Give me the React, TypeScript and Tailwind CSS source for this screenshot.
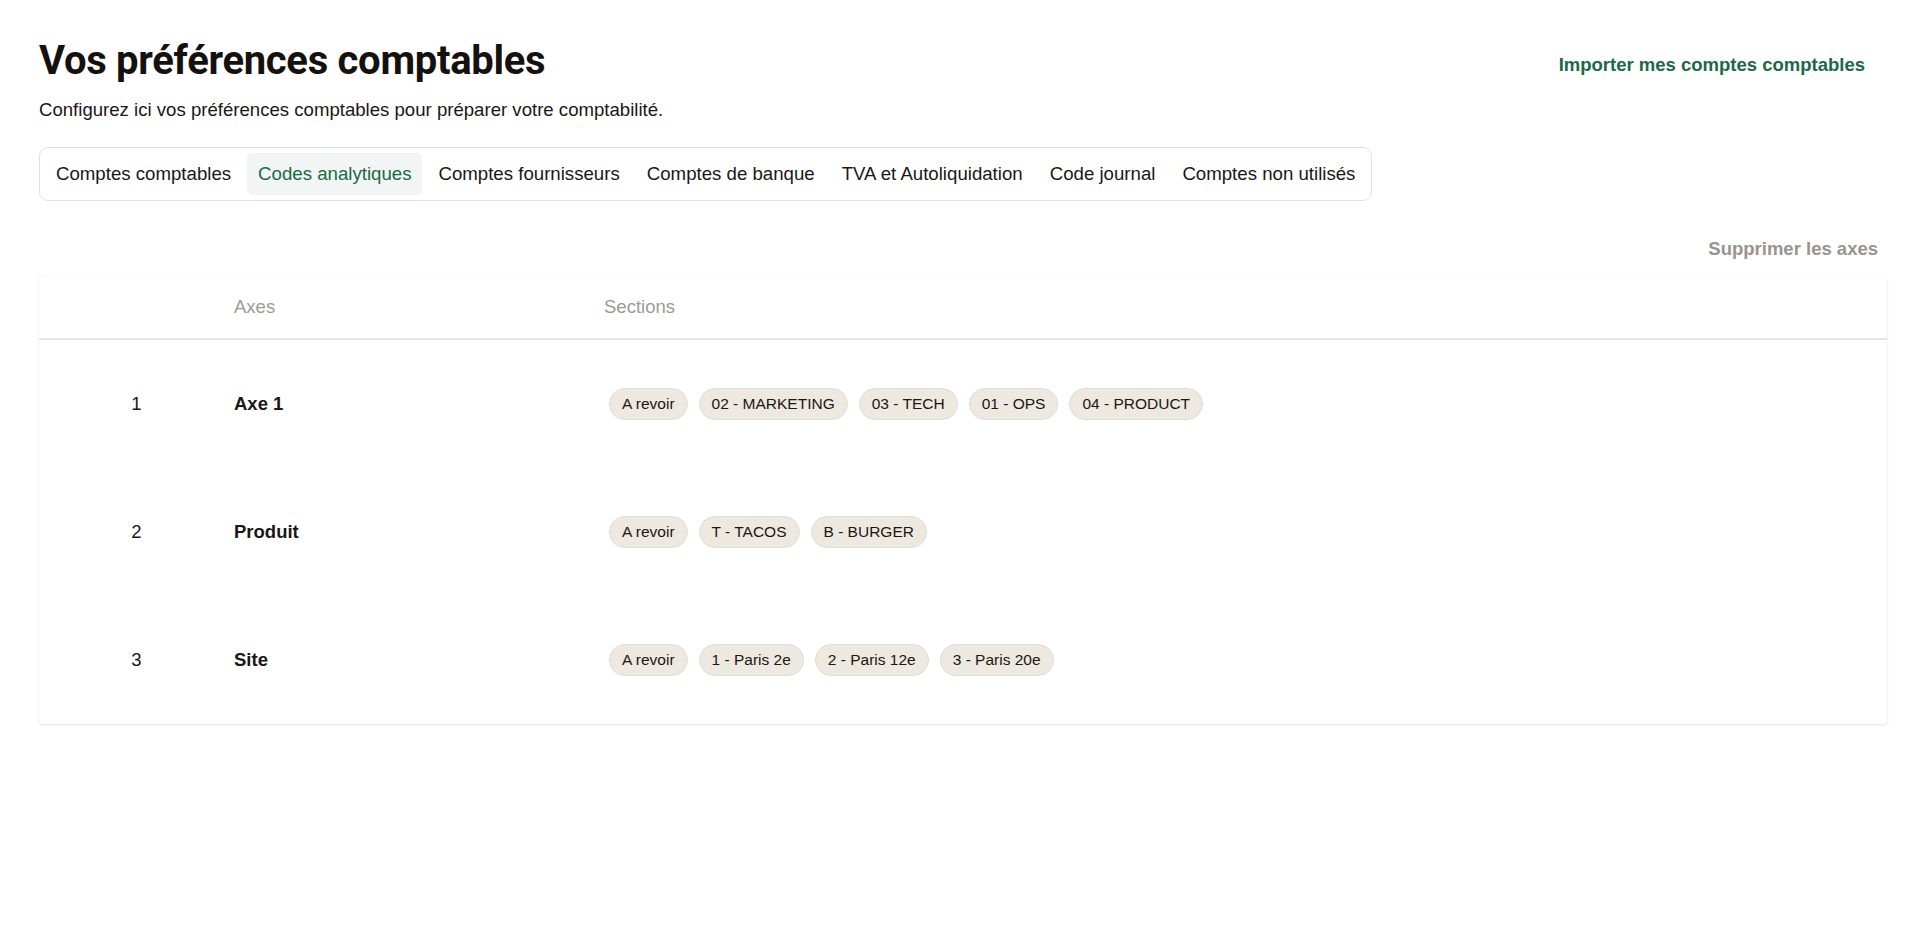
import React from 'react';

const tabs = [
  'Comptes comptables',
  'Codes analytiques',
  'Comptes fournisseurs',
  'Comptes de banque',
  'TVA et Autoliquidation',
  'Code journal',
  'Comptes non utilisés',
];

const axes = [
  { id: 1, name: 'Axe 1', sections: ['A revoir', '02 - MARKETING', '03 - TECH', '01 - OPS', '04 - PRODUCT'] },
  { id: 2, name: 'Produit', sections: ['A revoir', 'T - TACOS', 'B - BURGER'] },
  { id: 3, name: 'Site', sections: ['A revoir', '1 - Paris 2e', '2 - Paris 12e', '3 - Paris 20e'] },
];

const Chip: React.FC<{ label: string }> = ({ label }) => (
  <span className="h-[32px] px-[12px] flex items-center rounded-full bg-[#ede8e0] border border-[#e2dcd3] text-[15.5px] text-[#1a1714] whitespace-nowrap">
    {label}
  </span>
);

export default function App() {
  return (
    <div className="min-h-screen bg-white pl-[39px] pr-[33px] font-['Liberation_Sans',Arial,sans-serif] text-[#1a1714]">
      <div className="flex justify-between items-start pt-[38px] pr-[22px]">
        <h1 className="font-['Roboto',sans-serif] font-bold text-[40px] leading-[46px] tracking-[-0.3px] text-[#15110e]">
          Vos préférences comptables
        </h1>
        <button className="mt-[16px] text-[18.5px] leading-[22px] font-bold text-[#1b6a47]">
          Importer mes comptes comptables
        </button>
      </div>
      <p className="mt-[12px] text-[18.6px] leading-[27px]">
        Configurez ici vos préférences comptables pour préparer votre comptabilité.
      </p>

      <div className="mt-[24px] inline-flex items-center gap-[5px] p-[5px] border border-[#e6e1da] rounded-[9px]">
        {tabs.map((t, i) => (
          <div
            key={t}
            className={`h-[42px] px-[11px] flex items-center rounded-[5px] text-[18.65px] whitespace-nowrap ${
              i === 1 ? 'bg-[#f1f5f3] text-[#1b6a47]' : 'text-[#1a1714]'
            }`}
          >
            {t}
          </div>
        ))}
      </div>

      <div className="flex justify-end mt-[37px] pr-[9px]">
        <button className="text-[18.5px] leading-[22px] font-bold text-[#9a948e]">Supprimer les axes</button>
      </div>

      <div className="mt-[16px] bg-white rounded-[3px] shadow-[0_1px_3px_rgba(0,0,0,0.10),0_0_1px_rgba(0,0,0,0.10)]">
        <div className="h-[64px] flex items-center border-b-2 border-[#e8e4de] text-[18.5px] text-[#9f9993]">
          <div className="w-[195px]" />
          <div className="w-[370px]">Axes</div>
          <div>Sections</div>
        </div>
        {axes.map((a) => (
          <div key={a.id} className="h-[128px] flex items-center text-[18.5px]">
            <div className="w-[195px] text-center">{a.id}</div>
            <div className="w-[370px] font-bold">{a.name}</div>
            <div className="flex items-center gap-[11px] pl-[5px]">
              {a.sections.map((s) => (
                <Chip key={s} label={s} />
              ))}
            </div>
          </div>
        ))}
      </div>
    </div>
  );
}
